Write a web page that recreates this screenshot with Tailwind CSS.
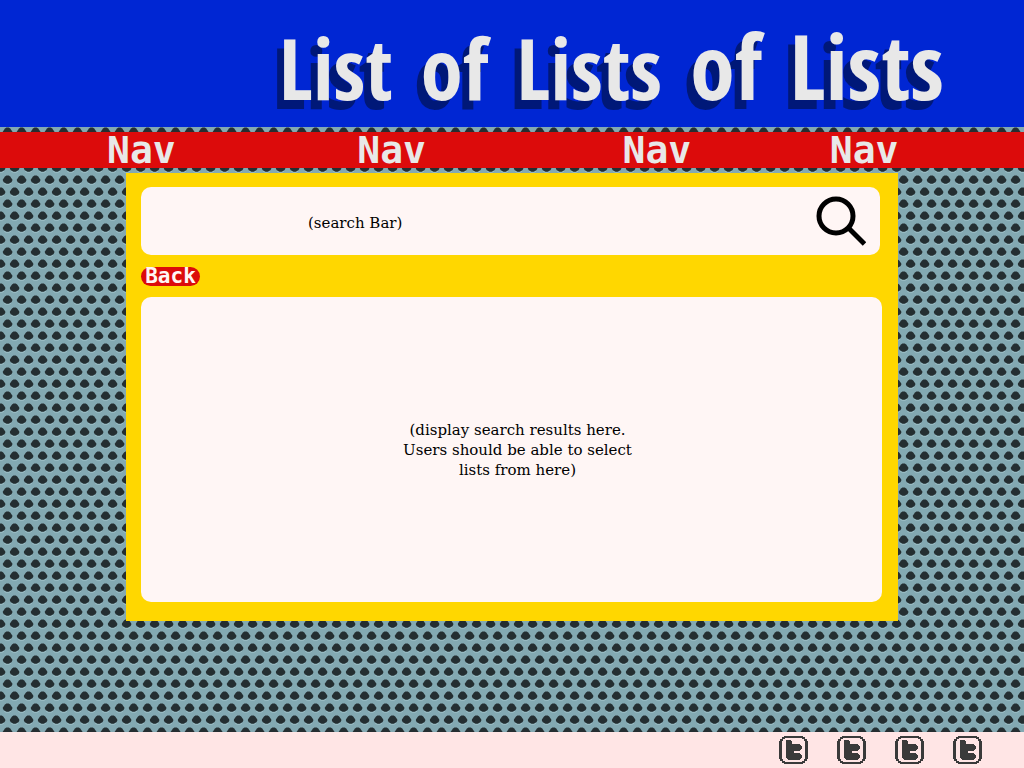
<!DOCTYPE html>
<html lang="en">
<head>
<meta charset="utf-8">
<meta name="viewport" content="width=device-width, initial-scale=1">
<title>List of Lists of Lists</title>
<script src="https://cdn.jsdelivr.net/npm/@tailwindcss/browser@4"></script>
</head>
<body class="relative isolate flex min-h-screen flex-col bg-[#83a9b2]">
  <!-- Dotted page background -->
  <svg class="absolute inset-0 -z-10 h-full w-full" aria-hidden="true">
    <defs>
      <path id="dot" d="M-1.2-4.2H1.2L2.6-3L4-1.2L4.7 0V1.2L3.8 2.6L2.4 3.4L1 4.2H-1L-2.4 3.4L-3.8 2.6L-4.7 1.2V0L-4-1.2L-2.6-3Z" fill="#242e31"/>
      <path id="shine" d="M-3.5 3.5L-1.5 4.8H1.5L3.5 3.5" fill="none" stroke="#9abdc5" stroke-width="1"/>
      <pattern id="dots" width="14" height="24" patternUnits="userSpaceOnUse" y="6">
        <use href="#shine" x="7.6" y="5.6"/><use href="#dot" x="7.6" y="5.6"/>
        <use href="#shine" x="0.6" y="17.6"/><use href="#dot" x="0.6" y="17.6"/>
        <use href="#shine" x="14.6" y="17.6"/><use href="#dot" x="14.6" y="17.6"/>
      </pattern>
    </defs>
    <rect width="100%" height="100%" fill="url(#dots)"/>
  </svg>

  <header class="flex h-[127px] items-end justify-end bg-[#0026d3] pr-20 pb-1">
    <h1 class="flex items-baseline gap-7 font-['Noto_Sans_ExtraCondensed','Open_Sans_Condensed','Roboto_Condensed','Liberation_Sans',sans-serif] text-[85px] leading-[112px] font-medium whitespace-nowrap text-[#e8e8e8] [text-shadow:-7px_9px_0_#001878]"><span>List</span> <span>of</span> <span>Lists</span> <span class="text-[90px]">of</span> <span class="text-[90px]">Lists</span></h1>
  </header>

  <nav class="mt-[5px] grid h-9 grid-cols-[250fr_265fr_207fr_194fr] items-center bg-[#dc0b0b] pl-[107px] font-['DejaVu_Sans_Mono',monospace] text-[38px] leading-9 font-bold text-[#e8e8e8]">
    <a href="#" class="justify-self-start">Nav</a>
    <a href="#" class="justify-self-start">Nav</a>
    <a href="#" class="justify-self-start">Nav</a>
    <a href="#" class="justify-self-start">Nav</a>
  </nav>

  <main class="mx-[126px] mt-[5px] mb-[111px] flex grow flex-col items-stretch bg-[#ffd700] pt-3.5 pr-4 pb-[19px] pl-[15px] font-['DejaVu_Serif',serif] text-[15px] leading-5 text-black">
    <form class="mr-0.5 flex h-[68px] items-center rounded-[10px] bg-[#fff6f5] pr-3.5">
      <input type="search" aria-label="Search" placeholder="(search Bar)" class="h-full min-w-0 grow appearance-none bg-transparent pt-1 pl-[167px] outline-none placeholder:text-black">
      <button type="button" aria-label="Search">
        <svg class="block size-[50px]" viewBox="0 0 50 50" fill="none" stroke="#000" stroke-width="5">
          <circle cx="20" cy="20" r="17"/>
          <path d="M32 31.5L48.5 48"/>
        </svg>
      </button>
    </form>
    <button type="button" class="mt-3 h-[19px] w-[59px] rounded-full bg-[#dc0b0b] text-center font-['DejaVu_Sans_Mono',monospace] text-[21px] leading-[19px] font-bold text-[#fff6f5]">Back</button>
    <section aria-label="Search results" class="mt-[11px] flex grow items-center justify-center rounded-[10px] bg-[#fff6f5] pl-3 text-center">
      <p>(display search results here.<br>Users should be able to select<br>lists from here)</p>
    </section>
  </main>

  <footer class="flex h-9 items-center justify-end gap-[29px] bg-[#ffe5e5] pr-[42px]">
    <svg class="hidden" aria-hidden="true">
      <symbol id="bird" viewBox="0 0 29 28">
        <path d="M5 0H24V1H26V3H28V5H29V23H28V25H26V27H24V28H5V27H3V25H1V23H0V5H1V3H3V1H5ZM6 2V3H4V5H3V23H4V25H6V26H23V25H25V23H26V5H25V3H23V2Z" fill="#3a3a3a" fill-rule="evenodd"/>
        <path d="M7 4H12V5H13V8H21V9H22V10H23V13H22V14H21V15H15V17H21V18H22V19H23V22H22V23H21V24H9V23H8V22H7Z" fill="#3a3a3a"/>
        <path d="M21 25h1v1h-1zM22 24h1v1h-1z" fill="#ffe5e5"/>
      </symbol>
    </svg>
    <a href="#" aria-label="Twitter"><svg class="block h-7 w-[29px]"><use href="#bird"/></svg></a>
    <a href="#" aria-label="Twitter"><svg class="block h-7 w-[29px]"><use href="#bird"/></svg></a>
    <a href="#" aria-label="Twitter"><svg class="block h-7 w-[29px]"><use href="#bird"/></svg></a>
    <a href="#" aria-label="Twitter"><svg class="block h-7 w-[29px]"><use href="#bird"/></svg></a>
  </footer>
</body>
</html>
